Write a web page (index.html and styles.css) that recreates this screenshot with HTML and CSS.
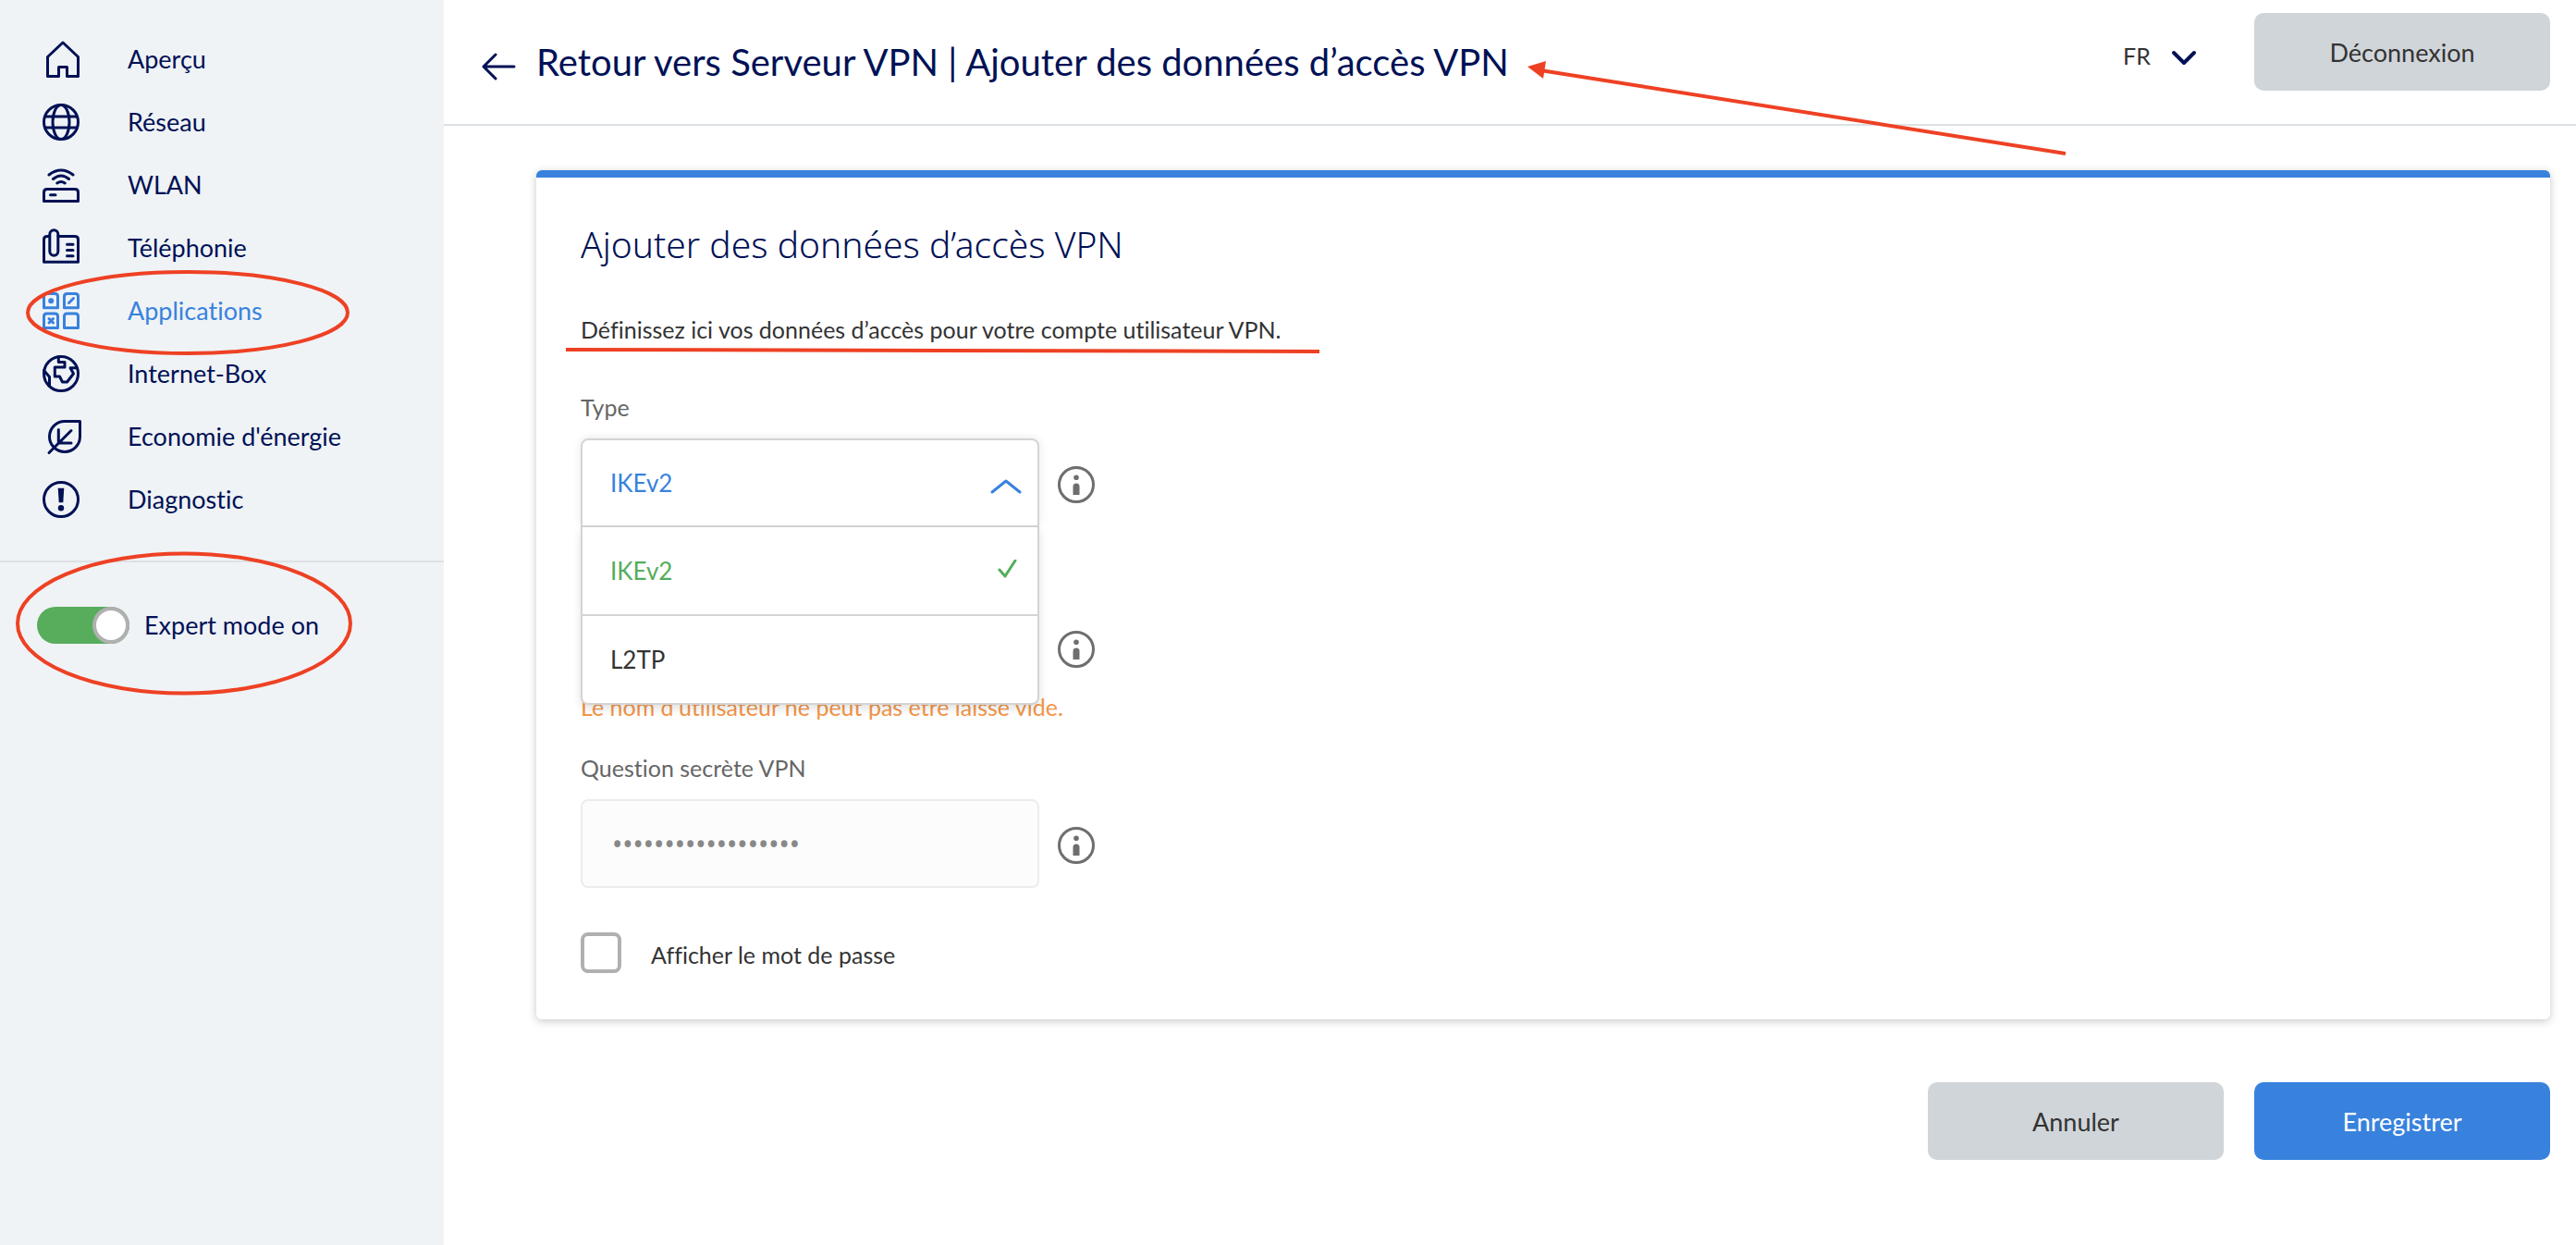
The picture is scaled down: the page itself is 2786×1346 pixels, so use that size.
FILE: index.html
```
<!DOCTYPE html>
<html lang="fr">
<head>
  <meta charset="UTF-8">
  <meta name="viewport" content="width=device-width, initial-scale=1.0">
  <title>Ajouter des données d’accès VPN</title>
  <link rel="stylesheet" href="styles.css">
</head>
<body>
  <aside class="sidebar">
    <nav class="menu">
      <a href="#">
        <svg class="icon" viewBox="0 0 44 44"><path d="M24 4 7.500 19.500V40.500H19.500V30.500H28.500V40.500H40.500V19.500Z"/></svg>
        Aperçu
      </a>
      <a href="#">
        <svg class="icon" viewBox="0 0 44 44"><circle cx="22" cy="22" r="18.500"/><ellipse cx="22" cy="22" rx="9" ry="18.500"/><path d="M5 16H39M5 28H39"/></svg>
        Réseau
      </a>
      <a href="#">
        <svg class="icon" viewBox="0 0 44 44"><path d="M3.500 39.500V30q0-3.500 3.500-3.500H37q3.500 0 3.500 3.500V39.500ZM10.500 32.700H16M9 11Q22 1 35 11M13.500 15.500Q22 8.500 30.500 15.500M17.800 20Q22 17 26.200 20"/></svg>
        WLAN
      </a>
      <a href="#">
        <svg class="icon" viewBox="0 0 44 44"><path d="M9.500 9.500H7q-3.500 0-3.500 3.500V37.300H40.500V13q0-3.500-3.500-3.500H19M28.500 18.300H35M28.500 24.600H35M28.500 30.700H35"/><rect x="9.800" y="2.800" width="9" height="27.400" rx="4.500"/></svg>
        Téléphonie
      </a>
      <a href="#" class="active">
        <svg class="icon" viewBox="0 0 44 44"><path d="M3.500 18.700V6.500q0-3 3-3H15.500q3 0 3 3V18.700ZM25.500 18.700V6.500q0-3 3-3H37.500q3 0 3 3V18.700ZM3.500 40.500V28q0-3 3-3H15.500q3 0 3 3V40.500ZM25.500 40.500V28q0-3 3-3H37.500q3 0 3 3V40.500ZM30.500 13.500 35.500 8.500M9 30.500 13.500 35M13.500 30.500 9 35"/><circle class="solid" cx="11.200" cy="11.200" r="3"/></svg>
        Applications
        <svg class="mark mark-menu" viewBox="0 0 350 92"><ellipse cx="175" cy="46" rx="173" ry="44"/></svg>
      </a>
      <a href="#">
        <svg class="icon" viewBox="0 0 44 44"><circle cx="22" cy="22" r="18.500"/><path d="M19.300 4V9.500H26V15H15.300V25H20.500L23.500 31H28.500L35.500 22 32 15.800H39M3.500 18.500 9.500 25.500V35"/></svg>
        Internet-Box
      </a>
      <a href="#">
        <svg class="icon" viewBox="0 0 44 44"><path d="M42.500 5.500H26A16.500 16.500 0 1 0 42.500 22ZM9 39.500 33 15.500M19.300 14.500V29H33"/></svg>
        Economie d'énergie
      </a>
      <a href="#">
        <svg class="icon" viewBox="0 0 44 44"><circle cx="22" cy="22" r="18.500"/><path class="solid" d="M18.700 9.700H25.300L24.300 25.300H19.700Z"/><circle class="solid" cx="22" cy="31.300" r="3.200"/></svg>
        Diagnostic
      </a>
    </nav>
    <div class="expert">
      <input type="checkbox" id="expertMode" class="toggle" checked>
      <label for="expertMode">Expert mode on</label>
      <svg class="mark mark-expert" viewBox="0 0 364 156"><ellipse cx="182" cy="78" rx="180" ry="75.500"/></svg>
    </div>
  </aside>

  <div class="page">
    <header class="topbar">
      <a href="#" class="back" aria-label="Retour">
        <svg viewBox="0 0 40 40"><path d="M36 25H3M16 12 3 25 16 38"/></svg>
      </a>
      <h1>Retour vers Serveur VPN | Ajouter des données d’accès VPN</h1>
      <div class="tools">
        <div class="lang">
          <select aria-label="Langue">
            <option>FR</option>
            <option>DE</option>
            <option>IT</option>
            <option>EN</option>
          </select>
          <svg viewBox="0 0 28 20"><path d="M3 4 14 15 25 4"/></svg>
        </div>
        <button type="button" class="btn">Déconnexion</button>
      </div>
      <svg class="mark mark-arrow" viewBox="0 0 584 106"><path d="M584 102 16 12"/><path class="tip" d="M2 8 22 2 19 21Z"/></svg>
    </header>

    <main>
      <form onsubmit="return false">
        <section class="card">
          <h2>Ajouter des données d’accès VPN</h2>
          <p class="intro">
            Définissez ici vos données d’accès pour votre compte utilisateur VPN.
            <svg class="mark mark-line" viewBox="0 0 815 8"><path d="M0 3 815 5"/></svg>
          </p>

          <div class="field">
            <label for="vpnType">Type</label>
            <div class="row">
              <div class="dropdown">
                <select id="vpnType">
                  <option>IKEv2</option>
                  <option>L2TP</option>
                </select>
                <svg class="chevron" viewBox="0 0 36 20"><path d="M3 16 18 4 33 16"/></svg>
                <ul class="options" id="typeOptions">
                  <li class="selected">IKEv2 <svg viewBox="0 0 24 24"><path d="M3 11 9 18 20 1"/></svg></li>
                  <li>L2TP</li>
                </ul>
              </div>
              <button type="button" class="info" aria-label="Info"><svg viewBox="0 0 40 40"><circle cx="20" cy="20" r="18.500"/><circle class="solid" cx="20" cy="12.300" r="2.800"/><path class="solid" d="M16.500 31V22Q16.500 18.500 20 18.500T23.500 22V31Z"/></svg></button>
            </div>
          </div>

          <div class="field field-user">
            <div class="row">
              <input type="text" id="vpnUser" class="text" aria-label="Nom d’utilisateur">
              <button type="button" class="info" aria-label="Info"><svg viewBox="0 0 40 40"><circle cx="20" cy="20" r="18.500"/><circle class="solid" cx="20" cy="12.300" r="2.800"/><path class="solid" d="M16.500 31V22Q16.500 18.500 20 18.500T23.500 22V31Z"/></svg></button>
            </div>
            <p class="error">Le nom d’utilisateur ne peut pas être laissé vide.</p>
          </div>

          <div class="field">
            <label for="vpnSecret">Question secrète VPN</label>
            <div class="row">
              <input type="password" id="vpnSecret" class="text" value="abcdefghijklmnopqr" disabled>
              <button type="button" class="info" aria-label="Info"><svg viewBox="0 0 40 40"><circle cx="20" cy="20" r="18.500"/><circle class="solid" cx="20" cy="12.300" r="2.800"/><path class="solid" d="M16.500 31V22Q16.500 18.500 20 18.500T23.500 22V31Z"/></svg></button>
            </div>
          </div>

          <div class="check">
            <input type="checkbox" id="showPassword">
            <label for="showPassword">Afficher le mot de passe</label>
          </div>
        </section>

        <div class="actions">
          <button type="button" class="btn">Annuler</button>
          <button type="submit" class="btn primary">Enregistrer</button>
        </div>
      </form>
    </main>
  </div>

  <script>
    const showPassword = document.getElementById('showPassword');
    const secret = document.getElementById('vpnSecret');
    showPassword.addEventListener('change', () => {
      secret.type = showPassword.checked ? 'text' : 'password';
    });

    const typeSelect = document.getElementById('vpnType');
    document.querySelectorAll('#typeOptions li').forEach((item) => {
      item.addEventListener('click', () => {
        typeSelect.value = item.textContent.trim();
        document.getElementById('typeOptions').hidden = true;
      });
    });
  </script>
</body>
</html>
```

FILE: styles.css
```
* {
  box-sizing: border-box;
}
body {
  margin: 0;
  min-height: 100vh;
  display: flex;
  font-family: Lato, "Liberation Sans", sans-serif;
  font-size: 25px;
  font-variant-ligatures: none;
  line-height: 32px;
  color: #333;
  background: #fff;
}
h1, h2, p, ul {
  margin: 0;
  padding: 0;
}
input, select, button {
  appearance: none;
  margin: 0;
  font-family: inherit;
  color: inherit;
}
svg {
  display: block;
  flex: none;
  fill: none;
  stroke: currentColor;
  stroke-width: 3;
  stroke-linecap: round;
  stroke-linejoin: round;
}
svg .solid {
  fill: currentColor;
  stroke: none;
}

/* sidebar */
.sidebar {
  flex: none;
  width: 480px;
  padding-top: 30px;
  background: #eff3f6;
  color: #001155;
  font-size: 27px;
}
.menu {
  padding-bottom: 32px;
  border-bottom: 2px solid #dde1e5;
}
.menu a {
  position: relative;
  display: flex;
  align-items: center;
  gap: 50px;
  height: 68px;
  padding-left: 44px;
  color: inherit;
  text-decoration: none;
}
.menu a.active {
  color: #3882dd;
}
.icon {
  width: 44px;
  height: 44px;
}
.expert {
  position: relative;
  display: flex;
  align-items: center;
  gap: 16px;
  padding: 48px 0 0 40px;
}
.toggle {
  display: flex;
  justify-content: flex-end;
  width: 100px;
  height: 40px;
  border-radius: 20px;
  background: #b0b0b0;
  cursor: pointer;
}
.toggle:checked {
  background: #58ad5d;
}
.toggle::before {
  content: "";
  width: 40px;
  height: 40px;
  box-sizing: border-box;
  border: 4px solid #b0b0b0;
  border-radius: 50%;
  background: #fff;
}
.toggle:not(:checked) {
  justify-content: flex-start;
}

/* red pen marks lying over the page */
.mark {
  position: absolute;
  z-index: 5;
  color: #ee4124;
  stroke-width: 4;
  stroke-linecap: butt;
  pointer-events: none;
}
.mark .tip {
  fill: currentColor;
  stroke: none;
}
.mark-menu {
  left: 28px;
  top: -10px;
  width: 350px;
  height: 92px;
}
.mark-expert {
  left: 17px;
  top: -12px;
  width: 364px;
  height: 156px;
}
.mark-arrow {
  left: 1170px;
  top: 64px;
  width: 584px;
  height: 106px;
}
.mark-line {
  left: -16px;
  top: 35px;
  width: 815px;
  height: 8px;
}

/* header */
.page {
  flex: 1;
  min-width: 0;
}
.topbar {
  position: relative;
  display: flex;
  align-items: center;
  height: 136px;
  padding: 0 28px 0 40px;
  border-bottom: 2px solid #dde1e5;
}
.back {
  margin-right: 20px;
  color: #001155;
}
.back svg {
  width: 40px;
  height: 40px;
}
h1, h2 {
  font-size: 40px;
  line-height: 56px;
  color: #001155;
}
h1 {
  font-weight: 400;
}
h2 {
  font-family: "Noto Sans", sans-serif;
  font-size: 39px;
  font-weight: 300;
}
.tools {
  align-self: flex-start;
  display: flex;
  align-items: center;
  gap: 62px;
  margin: 14px 0 0 auto;
}
.lang {
  position: relative;
  padding-top: 8px;
}
.lang select {
  display: block;
  width: 80px;
  padding: 0;
  border: 0;
  background: none;
  font-size: 25px;
  line-height: 32px;
}
.lang svg {
  position: absolute;
  right: 0;
  bottom: 3px;
  width: 28px;
  height: 20px;
  color: #001155;
  stroke-width: 4;
  pointer-events: none;
}
.btn {
  width: 320px;
  height: 84px;
  border: 0;
  border-radius: 10px;
  background: #d0d5d9;
  color: #333;
  font-size: 27px;
  cursor: pointer;
}
.btn.primary {
  background: #3882dd;
  color: #fff;
}

/* card */
main {
  padding: 48px 28px 92px 100px;
}
.card {
  padding: 44px 48px 50px;
  border-top: 8px solid #3882dd;
  border-radius: 6px;
  background: #fff;
  box-shadow: 0 2px 10px rgba(0, 0, 0, 0.22);
}
.intro {
  position: relative;
  margin: 48px 0 52px;
}
.field {
  margin-bottom: 34px;
  color: #666;
}
.field-user {
  margin-top: 82px;
}
.field label {
  display: block;
  margin-bottom: 18px;
}
.row {
  display: flex;
  align-items: center;
  gap: 20px;
}
.dropdown {
  position: relative;
  z-index: 2;
  width: 496px;
  border-radius: 8px;
  box-shadow: 0 0 10px rgba(0, 0, 0, 0.1);
}
.dropdown select {
  display: block;
  width: 100%;
  height: 96px;
  padding: 0 30px;
  border: 2px solid #d4d4d4;
  border-radius: 8px 8px 0 0;
  background: #fff;
  color: #3882dd;
  font-size: 26px;
}
.chevron {
  position: absolute;
  right: 18px;
  top: 42px;
  width: 36px;
  height: 20px;
  color: #3882dd;
  pointer-events: none;
}
.options {
  position: absolute;
  left: 0;
  right: 0;
  top: 96px;
  border: 2px solid #d4d4d4;
  border-top: 0;
  border-radius: 0 0 8px 8px;
  background: #fff;
  box-shadow: 0 4px 10px rgba(0, 0, 0, 0.12);
  color: #333;
  font-size: 26px;
  list-style: none;
}
.options li {
  display: flex;
  align-items: center;
  justify-content: space-between;
  height: 94px;
  padding: 0 20px 0 30px;
}
.options li + li {
  height: 96px;
  border-top: 2px solid #d4d4d4;
}
.options .selected {
  color: #54ad5b;
}
.options svg {
  width: 24px;
  height: 24px;
}
.info {
  padding: 4px 0 0;
  border: 0;
  background: none;
  color: #6e6e6e;
  cursor: pointer;
}
.info svg {
  width: 40px;
  height: 40px;
}
.text {
  width: 496px;
  height: 96px;
  padding: 0 32px;
  border: 2px solid #d4d4d4;
  border-radius: 8px;
  background: #fff;
  font-size: 26px;
}
.text:disabled {
  border-color: #ececec;
  background: #fcfcfc;
  color: #888;
}
.text[type="password"] {
  font-family: "Noto Sans", sans-serif;
  font-size: 30px;
}
.error {
  color: #f29547;
}
.check {
  display: flex;
  align-items: center;
  gap: 32px;
  margin-top: 48px;
}
.check label {
  padding-top: 4px;
}
.check input {
  width: 44px;
  height: 44px;
  border: 4px solid #b0b0b0;
  border-radius: 8px;
}
.check input:checked {
  background: #3882dd;
}
.actions {
  display: flex;
  justify-content: flex-end;
  gap: 33px;
  margin-top: 68px;
}
```
